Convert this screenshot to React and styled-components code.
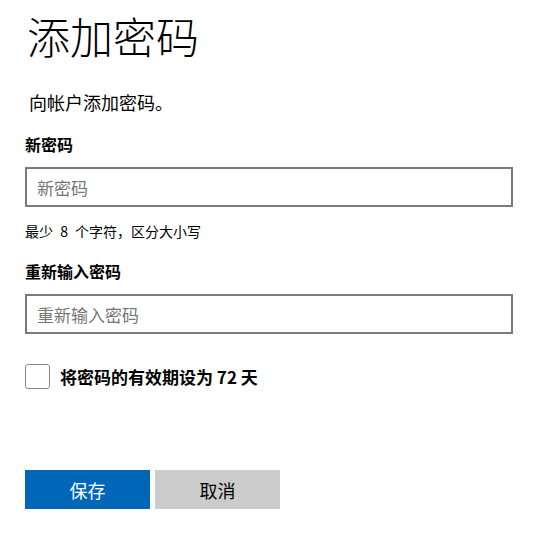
import React, { useState } from "react";
import styled, { createGlobalStyle } from "styled-components";

const GlobalStyle = createGlobalStyle`
  body {
    margin: 0;
    background: #fff;
    font-family: "Noto Sans CJK SC", "Noto Sans", sans-serif;
    color: #000;
  }
`;

const Page = styled.div`
  padding: 9px 35px 0 25px;
  display: flex;
  flex-direction: column;
`;

const Title = styled.h1`
  margin: 0 0 0 2px;
  font-size: 43px;
  line-height: 53px;
  font-weight: 300;
`;

const Intro = styled.p`
  margin: 28px 0 0 4px;
  font-size: 18px;
  line-height: 24px;
`;

const Label = styled.label`
  margin-top: ${(p) => p.$top}px;
  font-size: 16px;
  line-height: 22px;
  font-weight: 700;
`;

const Input = styled.input`
  box-sizing: border-box;
  margin-top: 12px;
  width: 488px;
  height: 40px;
  border: 2px solid #7a7a7a;
  padding: 0 10px;
  font-family: inherit;
  font-size: 17px;
  outline: none;
  &::placeholder {
    color: #767676;
  }
`;

const Hint = styled.div`
  margin-top: 15px;
  font-size: 14px;
  line-height: 19px;
  word-spacing: 4px;
`;

const CheckRow = styled.label`
  margin-top: 30px;
  display: flex;
  align-items: center;
  gap: 10px;
  font-size: 17px;
  font-weight: 700;
  cursor: pointer;
`;

const Box = styled.span`
  box-sizing: border-box;
  width: 25px;
  height: 25px;
  border: 1.5px solid #8a8a8a;
  border-radius: 3px;
  background: ${(p) => (p.$checked ? "#0067b8" : "#fff")};
`;

const Buttons = styled.div`
  margin-top: 81px;
  display: flex;
  gap: 5px;
`;

const Button = styled.button`
  width: 125px;
  height: 39px;
  border: none;
  font-family: inherit;
  font-size: 18px;
  background: ${(p) => (p.$primary ? "#0067b8" : "#cccccc")};
  color: ${(p) => (p.$primary ? "#fff" : "#000")};
  cursor: pointer;
`;

const App = () => {
  const [expire, setExpire] = useState(false);

  return (
    <>
      <GlobalStyle />
      <Page>
        <Title>添加密码</Title>
        <Intro>向帐户添加密码。</Intro>
        <Label $top={19}>新密码</Label>
        <Input type="password" placeholder="新密码" />
        <Hint>最少 8 个字符，区分大小写</Hint>
        <Label $top={19}>重新输入密码</Label>
        <Input type="password" placeholder="重新输入密码" />
        <CheckRow onClick={() => setExpire(!expire)}>
          <Box $checked={expire} />
          将密码的有效期设为 72 天
        </CheckRow>
        <Buttons>
          <Button $primary>保存</Button>
          <Button>取消</Button>
        </Buttons>
      </Page>
    </>
  );
};

export default App;
